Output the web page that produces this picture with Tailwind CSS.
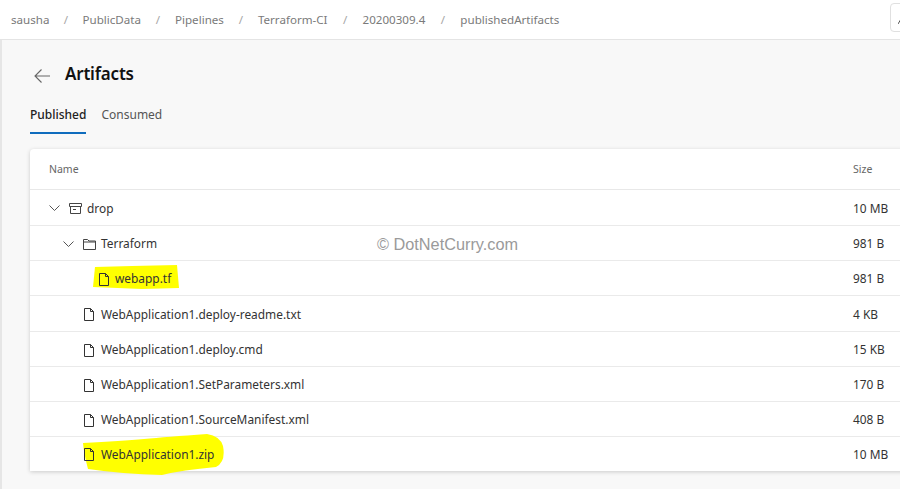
<!DOCTYPE html>
<html>
<head>
<meta charset="utf-8">
<script src="https://cdn.jsdelivr.net/npm/@tailwindcss/browser@4"></script>
</head>
<body class="m-0 overflow-hidden">
<div class="w-[900px] h-[489px] overflow-hidden bg-[#f8f8f8] font-['Noto_Sans',sans-serif] text-[#333] relative">
  <header class="h-10 bg-white border-b border-[#e4e4e4] flex items-center pl-[11px] text-[11.6px] text-[#7a7a7a] relative">
    <span>sausha</span><span class="w-[33px] text-center text-[#a6a6a6]">/</span>
    <span>PublicData</span><span class="w-[34px] text-center text-[#a6a6a6]">/</span>
    <span>Pipelines</span><span class="w-[34px] text-center text-[#a6a6a6]">/</span>
    <span>Terraform-CI</span><span class="w-[35px] text-center text-[#a6a6a6]">/</span>
    <span>20200309.4</span><span class="w-[35px] text-center text-[#a6a6a6]">/</span>
    <span>publishedArtifacts</span>
    <div class="absolute left-[890px] top-[3px] w-[20px] h-[29px] border border-[#e0e0e0] rounded-sm bg-white">
      <svg class="ml-[7px] mt-[15px] w-[3px] h-[5px] text-[#555]" viewBox="0 0 3 5" fill="none" stroke="currentColor"><path d="M0 5 3 0"/></svg>
    </div>
  </header>
  <div class="absolute left-0 top-10 bottom-0 w-[2px] bg-[#e6e6e6]"></div>
  <main class="pl-[30px]">
    <div class="flex items-center h-[34px] mt-[17px] pl-[4px]">
      <svg class="w-4 h-4 mt-[3px] text-[#666]" viewBox="0 0 16 16" fill="none" stroke="currentColor" stroke-width="1.1"><path d="M16 8H1M7.5 1.5 1 8l6.5 6.5"/></svg>
      <h1 class="ml-[15px] text-[17px] tracking-[-0.2px] font-semibold text-[#111]">Artifacts</h1>
    </div>
    <nav class="flex gap-[15px] mt-[12px] text-[12px] h-[30px]">
      <span class="h-[31px] leading-[24px] border-b-2 border-[#0f6cbd] font-medium text-[#222]">Published</span>
      <span class="leading-[24px] text-[#555]">Consumed</span>
    </nav>
    <section class="mt-[16px] w-[890px] bg-white rounded-t shadow-[0_1px_4px_rgba(0,0,0,0.18)] text-[11.9px] text-[#333] relative">
      <div class="h-[41px] flex items-center border-b border-[#e8e8e8] pt-[1px] text-[10.5px] text-[#666]">
        <span class="ml-[19px] w-[804px]">Name</span><span>Size</span>
      </div>

      <div class="h-[36px] pt-[2px] flex items-center border-b border-[#eaeaea]">
        <svg class="ml-[19px] w-[11px] h-[7px] text-[#555]" viewBox="0 0 11 7" fill="none" stroke="currentColor"><path d="M.5.5l5 5 5-5"/></svg>
        <svg class="ml-[9px] w-[13px] h-[13px] text-[#444]" viewBox="0 0 13 13" fill="none" stroke="currentColor"><path d="M.5 1.5h12v3H.5zM1.500 4.500v7h10v-7M4 7.500h3"/></svg>
        <span class="ml-[5px] w-[766px]">drop</span><span>10 MB</span>
      </div>
      <div class="h-[35px] pt-[2px] flex items-center border-b border-[#eaeaea]">
        <svg class="ml-[33px] w-[11px] h-[7px] text-[#555]" viewBox="0 0 11 7" fill="none" stroke="currentColor"><path d="M.5.5l5 5 5-5"/></svg>
        <svg class="ml-[9px] w-[13px] h-[11px] text-[#444]" viewBox="0 0 13 11" fill="none" stroke="currentColor"><path d="M.5 10.500v-10h4l1.500 1.500h6.500v8.500zM.5 3h12"/></svg>
        <span class="ml-[5px] w-[752px]">Terraform</span><span>981 B</span>
      </div>
      <div class="h-[35px] pt-[2px] flex items-center border-b border-[#eaeaea] relative">
        <svg class="absolute left-[62px] top-[4px] w-[87px] h-[24px]" viewBox="0 0 87 24"><path d="M3 2 40 1 85 0 87 23 50 24 1 22z" fill="#ffff00"/></svg>
        <svg class="relative ml-[69px] w-[10px] h-[13px] text-[#333]" viewBox="0 0 10 13" fill="none" stroke="currentColor"><path d="M.5.500h6l3 3v9h-9zM6.500.500v3h3"/></svg>
        <span class="relative ml-[6px] w-[738px]">webapp.tf</span><span>981 B</span>
      </div>
      <div class="h-[36px] pt-[2px] flex items-center border-b border-[#eaeaea]">
        <svg class="ml-[54px] w-[10px] h-[13px] text-[#333]" viewBox="0 0 10 13" fill="none" stroke="currentColor"><path d="M.5.500h6l3 3v9h-9zM6.500.500v3h3"/></svg>
        <span class="ml-[7px] w-[752px]">WebApplication1.deploy-readme.txt</span><span>4 KB</span>
      </div>
      <div class="h-[35px] pt-[2px] flex items-center border-b border-[#eaeaea]">
        <svg class="ml-[54px] w-[10px] h-[13px] text-[#333]" viewBox="0 0 10 13" fill="none" stroke="currentColor"><path d="M.5.500h6l3 3v9h-9zM6.500.500v3h3"/></svg>
        <span class="ml-[7px] w-[752px]">WebApplication1.deploy.cmd</span><span>15 KB</span>
      </div>
      <div class="h-[35px] pt-[2px] flex items-center border-b border-[#eaeaea]">
        <svg class="ml-[54px] w-[10px] h-[13px] text-[#333]" viewBox="0 0 10 13" fill="none" stroke="currentColor"><path d="M.5.500h6l3 3v9h-9zM6.500.500v3h3"/></svg>
        <span class="ml-[7px] w-[752px]">WebApplication1.SetParameters.xml</span><span>170 B</span>
      </div>
      <div class="h-[35px] pt-[2px] flex items-center border-b border-[#eaeaea]">
        <svg class="ml-[54px] w-[10px] h-[13px] text-[#333]" viewBox="0 0 10 13" fill="none" stroke="currentColor"><path d="M.5.500h6l3 3v9h-9zM6.500.500v3h3"/></svg>
        <span class="ml-[7px] w-[752px]">WebApplication1.SourceManifest.xml</span><span>408 B</span>
      </div>
      <div class="h-[34px] pt-[1px] flex items-center relative">
        <svg class="absolute left-[52px] top-[-3px] w-[143px] h-[42px]" viewBox="0 0 143 42"><path d="M1 9Q40 7 62 5T125 0Q138 2 141 12 144 28 134 33 100 36 80 41 40 40 6 35 2 20 1 9z" fill="#ffff00"/></svg>
        <svg class="relative ml-[54px] w-[10px] h-[13px] text-[#333]" viewBox="0 0 10 13" fill="none" stroke="currentColor"><path d="M.5.500h6l3 3v9h-9zM6.500.500v3h3"/></svg>
        <span class="relative ml-[7px] w-[752px]">WebApplication1.zip</span><span>10 MB</span>
      </div>
      <div class="absolute left-[347px] top-[83px] text-[16.3px] text-[#9a9a9a] font-['Liberation_Sans',sans-serif]">© DotNetCurry.com</div>
    </section>
  </main>
</div>
</body>
</html>
